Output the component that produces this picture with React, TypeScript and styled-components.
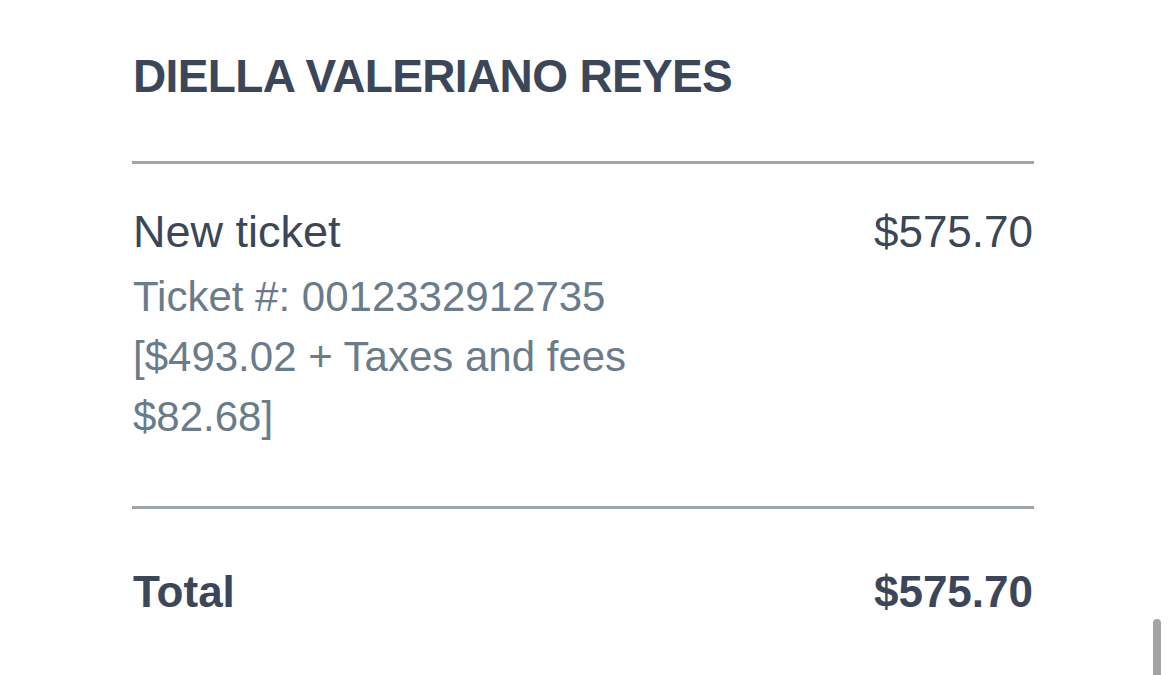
import React from "react";
import styled, { createGlobalStyle } from "styled-components";

const GlobalStyle = createGlobalStyle`
  html, body {
    margin: 0;
    padding: 0;
    background: #ffffff;
    overflow: hidden;
  }
  body {
    font-family: "Liberation Sans", Arial, Helvetica, sans-serif;
  }
`;

const Page = styled.div`
  width: 1170px;
  height: 675px;
  position: relative;
  background: #ffffff;
  overflow: hidden;
`;

const Receipt = styled.section`
  width: 900px;
  padding: 46px 0 0 133px;
  display: flex;
  flex-direction: column;
`;

const Passenger = styled.h1`
  margin: 0;
  font-size: 46px;
  line-height: 60px;
  font-weight: 700;
  letter-spacing: -0.65px;
  color: #3b4758;
`;

const Divider = styled.hr<{ $top: number }>`
  border: none;
  height: 3px;
  background: #9ea5ab;
  margin: ${(p) => p.$top}px -1px 0 -1px;
`;

const Row = styled.div<{ $top: number }>`
  display: flex;
  justify-content: space-between;
  align-items: baseline;
  margin-top: ${(p) => p.$top}px;
`;

const Label = styled.span<{ $bold?: boolean }>`
  font-size: ${(p) => (p.$bold ? 44 : 45)}px;
  line-height: 60px;
  font-weight: ${(p) => (p.$bold ? 700 : 400)};
  color: #3b4758;
`;

const Amount = styled.span<{ $bold?: boolean }>`
  font-size: 44px;
  line-height: 60px;
  font-weight: ${(p) => (p.$bold ? 700 : 400)};
  color: #3b4758;
`;

const Details = styled.div`
  margin-top: 5px;
  width: 520px;
  font-size: 42px;
  line-height: 60px;
  color: #6a7b8a;
`;

const DetailLine = styled.div``;

const ScrollThumb = styled.div`
  position: absolute;
  right: 9px;
  top: 619px;
  bottom: -10px;
  width: 8px;
  border-radius: 4px;
  background: #a3a3a3;
`;

export default function App() {
  return (
    <Page>
      <GlobalStyle />
      <Receipt>
        <Passenger>DIELLA VALERIANO REYES</Passenger>
        <Divider $top={55} />
        <Row $top={38}>
          <Label>New ticket</Label>
          <Amount>$575.70</Amount>
        </Row>
        <Details>
          <DetailLine>Ticket #: 0012332912735</DetailLine>
          <DetailLine>[$493.02 + Taxes and fees</DetailLine>
          <DetailLine>$82.68]</DetailLine>
        </Details>
        <Divider $top={59} />
        <Row $top={53}>
          <Label $bold>Total</Label>
          <Amount $bold>$575.70</Amount>
        </Row>
      </Receipt>
      <ScrollThumb />
    </Page>
  );
}
